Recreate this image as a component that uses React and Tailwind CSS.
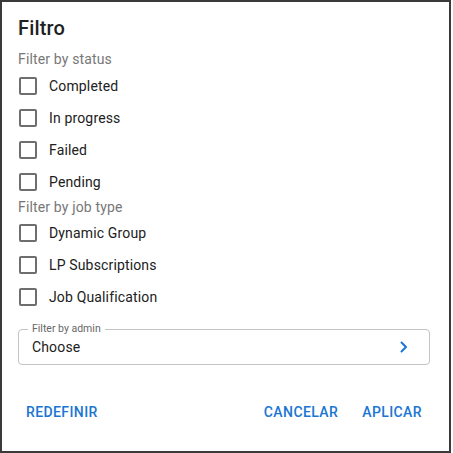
import React from 'react';

const statusOptions = ['Completed', 'In progress', 'Failed', 'Pending'];
const jobTypeOptions = ['Dynamic Group', 'LP Subscriptions', 'Job Qualification'];

const CheckRow = ({ label }) => (
  <label className="flex items-center h-8 gap-3 cursor-pointer">
    <span className="ml-px w-[18px] h-[18px] border-2 border-[#6e6e6e] rounded-[2px] bg-white"></span>
    <span className="text-[14px] tracking-[0.15px] text-[#212121]">{label}</span>
  </label>
);

export default function App() {
  return (
    <div className="w-[453px] h-[453px] bg-white" style={{ fontFamily: 'Roboto, "Liberation Sans", sans-serif' }}>
      <div className="w-[451px] h-[453px] border-2 border-[#3a3a3a] flex flex-col pl-4 pr-[19px]">
        {/* Title */}
        <h2 className="mt-3 text-[20px] leading-7 font-medium tracking-[0.15px] text-[#212121]">Filtro</h2>

        {/* Status filters */}
        <p className="mt-[7px] text-[14px] leading-5 tracking-[0.15px] text-[#777]">Filter by status</p>
        <div className="mt-px flex flex-col">
          {statusOptions.map((o) => (
            <CheckRow key={o} label={o} />
          ))}
        </div>

        {/* Job type filters */}
        <p className="-mt-px text-[14px] leading-5 tracking-[0.15px] text-[#777]">Filter by job type</p>
        <div className="flex flex-col">
          {jobTypeOptions.map((o) => (
            <CheckRow key={o} label={o} />
          ))}
        </div>

        {/* Admin select */}
        <div className="relative mt-4 h-9 border border-[#c4c4c4] rounded flex items-center pl-[13px] pr-5">
          <span className="absolute -top-[8px] left-[9px] px-[4px] bg-white text-[10.5px] leading-[14px] text-[#666]">
            Filter by admin
          </span>
          <span className="flex-1 text-[14px] tracking-[0.15px] text-[#212121]">Choose</span>
          <svg width="10" height="14" viewBox="0 0 10 14" fill="none">
            <path d="M2.5 2.5 L7 7 L2.5 11.5" stroke="#1976d2" strokeWidth="2" strokeLinecap="round" strokeLinejoin="round" />
          </svg>
        </div>

        {/* Actions */}
        <div className="mt-[29px] flex items-center h-9">
          <button className="px-2 h-9 text-[14px] font-medium tracking-[0.4px] text-[#1976d2]">REDEFINIR</button>
          <div className="flex-1"></div>
          <button className="px-2 h-9 text-[14px] font-medium tracking-[0.4px] text-[#1976d2]">CANCELAR</button>
          <button className="ml-2 px-2 h-9 text-[14px] font-medium tracking-[0.4px] text-[#1976d2]">APLICAR</button>
        </div>
      </div>
    </div>
  );
}
